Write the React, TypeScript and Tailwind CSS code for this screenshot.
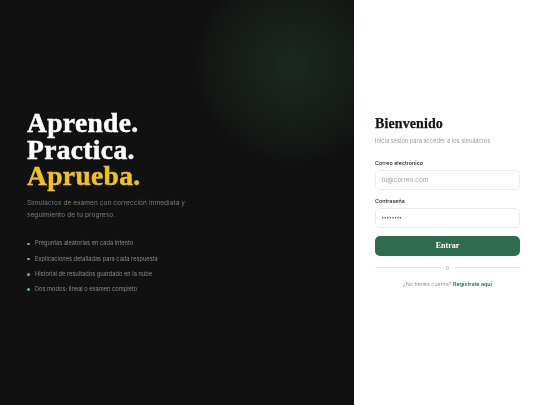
const serif = "font-['Liberation_Serif','DejaVu_Serif',serif]";

const features = [
  "Preguntas aleatorias en cada intento",
  "Explicaciones detalladas para cada respuesta",
  "Historial de resultados guardado en la nube",
  "Dos modos: lineal o examen completo",
];

function Hero() {
  return (
    <section className="relative flex w-[354px] shrink-0 flex-col justify-center overflow-hidden bg-[#111111] px-[27px] pb-[1.5px]">
      {/* glow */}
      <div className="absolute left-[195px] top-[-33px] h-[196px] w-[196px] rounded-full bg-[radial-gradient(circle_closest-side,#1a2a1f_0%,#19231d_20%,#171e1a_50%,#131614_90%,#111111_100%)]" />
      <div className="relative [will-change:transform]">
        <h1 className={`${serif} text-[27.5px] font-bold leading-[26.5px] tracking-[0.35px] text-white [-webkit-text-stroke:0.5px]`}>
          Aprende.
          <br />
          Practica.
          <br />
          <span className="text-[#f0c419]">Aprueba.</span>
        </h1>
        <p className="mt-[7px] w-[165px] text-[6.45px] leading-[12px] tracking-[0.1px] text-[#7d7d7d]">
          Simulacros de examen con corrección inmediata y seguimiento de tu progreso.
        </p>
        <ul className="mt-[19.5px] flex flex-col gap-[7.8px]">
          {features.map((f) => (
            <li key={f} className="flex h-[7.5px] items-center gap-[5.5px] text-[5.7px] text-[#8a8a8a]">
              <span className="h-[2.5px] w-[2.5px] rounded-full bg-[#5fb98c]" />
              {f}
            </li>
          ))}
        </ul>
      </div>
    </section>
  );
}

function Field({ label, placeholder, value }: { label: string; placeholder?: string; value?: string }) {
  return (
    <div>
      <label className="block text-[5.4px] font-medium leading-[8px] text-[#222222]">{label}</label>
      <input
        readOnly
        type={value ? "password" : "text"}
        placeholder={placeholder}
        value={value ?? ""}
        className={`mt-[3.5px] block h-[19.5px] w-full rounded-[5px] border border-[#ececec] bg-white px-[5.5px] text-[#333333] outline-none placeholder:text-[#a3a3a3] ${value ? "text-[4.5px]" : "text-[6.4px]"}`}
      />
    </div>
  );
}

function LoginForm() {
  return (
    <section className="flex flex-1 flex-col justify-center bg-white pl-[21px] pr-[20px]">
      <div className="[will-change:transform]">
        <h2 className={`${serif} text-[14px] font-bold leading-[16px] tracking-[0.1px] text-[#151515] [-webkit-text-stroke:0.25px]`}>Bienvenido</h2>
        <p className="mt-[4px] text-[5.7px] leading-[9px] text-[#9a9a9a]">Inicia sesión para acceder a los simulacros</p>
        <div className="mt-[13.5px] flex flex-col gap-[7px]">
          <Field label="Correo electrónico" placeholder="tu@correo.com" />
          <Field label="Contraseña" value="12345678" />
        </div>
        <button className={`${serif} mt-[8px] h-[20px] w-full rounded-[5px] bg-[#2f6b4f] text-[8px] font-bold text-white`}>
          Entrar
        </button>
        <div className="mt-[8px] flex items-center gap-[5px]">
          <div className="h-px flex-1 bg-[#e6e6e6]" />
          <span className="text-[5.5px] leading-[8px] text-[#aaaaaa]">o</span>
          <div className="h-px flex-1 bg-[#e6e6e6]" />
        </div>
        <p className="mt-[8px] text-center text-[5.4px] leading-[9px] text-[#999999]">
          ¿No tienes cuenta? <span className="font-semibold text-[#2f6b4f]">Regístrate aquí</span>
        </p>
      </div>
    </section>
  );
}

export default function App() {
  return (
    <div className="flex h-[405px] w-[540px] overflow-hidden font-['Inter','Liberation_Sans',sans-serif]">
      <Hero />
      <LoginForm />
    </div>
  );
}
